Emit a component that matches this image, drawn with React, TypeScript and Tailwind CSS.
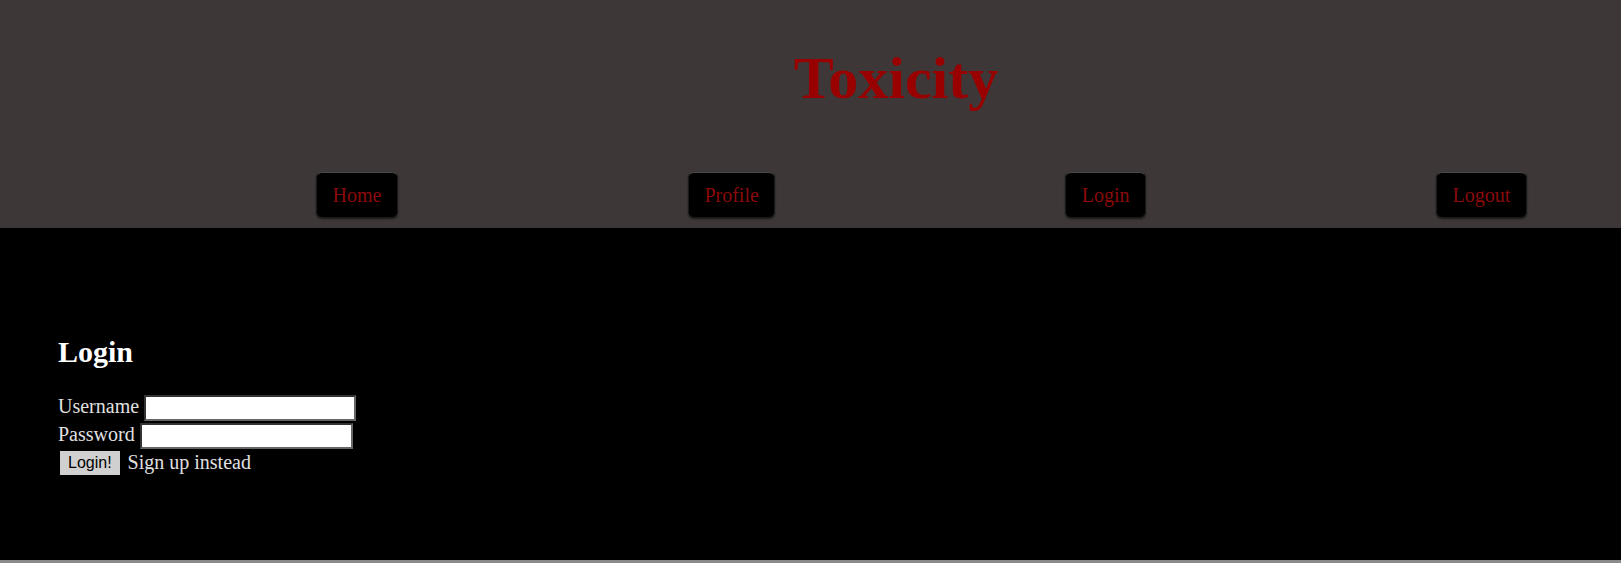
import React, { useState } from 'react';

const navItems = ['Home', 'Profile', 'Login', 'Logout'];

const App = () => {
  const [username, setUsername] = useState('');
  const [password, setPassword] = useState('');

  return (
    <div className="min-h-screen bg-[#8a8a8a] font-['Liberation_Serif','Times_New_Roman',serif]">
      {/* header */}
      <header className="h-[228px] bg-[#3d3837] flex flex-col">
        <div className="pl-[171px] pt-[48px]">
          <h1 className="text-center text-[60px] leading-none font-bold text-[#990000]">Toxicity</h1>
        </div>
        <nav className="flex gap-[290px] pl-[316px] mt-auto mb-[10px]">
          {navItems.map(item => (
            <button
              key={item}
              className="h-[46px] px-[15.5px] bg-black text-[#8b0a0a] text-[20px] rounded-[6px] border border-[#1a1a1a] border-t-[#4a4a4a] shadow-[0_1px_2px_rgba(0,0,0,0.6)]"
            >
              {item}
            </button>
          ))}
        </nav>
      </header>

      {/* login form */}
      <main className="h-[332px] bg-black pl-[58px] pt-[109px]">
        <h2 className="text-[30px] leading-none font-bold text-white">Login</h2>
        <div className="mt-[27px] text-[20px] text-[#e0e0e0]">
          <div className="flex items-center h-[28px]">
            <span className="self-start leading-[24px]">Username</span>
            <input
              value={username}
              onChange={e => setUsername(e.target.value)}
              className="ml-[5px] w-[212px] h-[26px] bg-white text-black border-2 border-[#666] border-t-[#333] border-l-[#333] outline-none"
            />
          </div>
          <div className="flex items-center h-[28px]">
            <span className="self-start leading-[24px]">Password</span>
            <input
              type="password"
              value={password}
              onChange={e => setPassword(e.target.value)}
              className="ml-[5px] w-[213px] h-[26px] bg-white text-black border-2 border-[#666] border-t-[#333] border-l-[#333] outline-none"
            />
          </div>
          <div className="flex items-start h-[28px]">
            <button className="ml-[2px] mt-[1px] h-[24px] px-[8px] bg-[#d0d0d0] text-black text-[16px] font-['Liberation_Sans',Arial,sans-serif]">
              Login!
            </button>
            <span className="ml-[8px] leading-[24px]">Sign up instead</span>
          </div>
        </div>
      </main>
    </div>
  );
};

export default App;
